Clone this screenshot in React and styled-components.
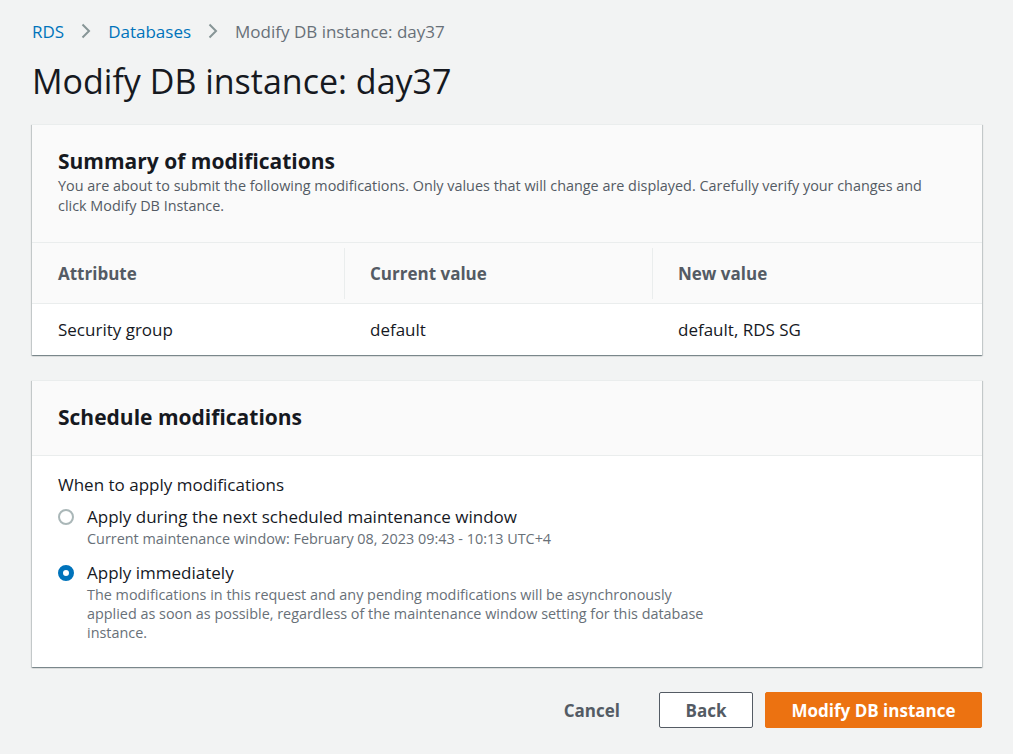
import styled, { createGlobalStyle } from "styled-components";

const GlobalStyle = createGlobalStyle`
  html, body {
    margin: 0;
    padding: 0;
    background: #f2f3f3;
    font-family: "Open Sans", "Noto Sans", sans-serif;
    color: #16191f;
  }
`;

const Chevron = () => (
  <svg width="12" height="18" viewBox="0 0 12 18">
    <path d="M2.5 2.5l6.5 6.5-6.5 6.5" fill="none" stroke="#879596" strokeWidth="2" />
  </svg>
);

const rows = [{ attr: "Security group", current: "default", next: "default, RDS SG" }];

export default function App() {
  return (
    <Page>
      <GlobalStyle />
      <Crumbs>
        <CrumbLink>RDS</CrumbLink>
        <Chevron />
        <CrumbLink>Databases</CrumbLink>
        <Chevron />
        <CrumbCurrent>Modify DB instance: day37</CrumbCurrent>
      </Crumbs>
      <Title>Modify DB instance: day37</Title>

      <Card>
        <CardHeader>
          <CardTitle>Summary of modifications</CardTitle>
          <CardDesc>
            You are about to submit the following modifications. Only values that will change are displayed.
            Carefully verify your changes and click Modify DB Instance.
          </CardDesc>
        </CardHeader>
        <Table>
          <HeadRow>
            <HeadCell>Attribute</HeadCell>
            <HeadCell divider>Current value</HeadCell>
            <HeadCell divider>New value</HeadCell>
          </HeadRow>
          {rows.map((r) => (
            <BodyRow key={r.attr}>
              <BodyCell>{r.attr}</BodyCell>
              <BodyCell>{r.current}</BodyCell>
              <BodyCell>{r.next}</BodyCell>
            </BodyRow>
          ))}
        </Table>
      </Card>

      <Card>
        <CardHeader>
          <CardTitle>Schedule modifications</CardTitle>
        </CardHeader>
        <CardBody>
          <FieldLabel>When to apply modifications</FieldLabel>
          <Option>
            <Radio />
            <OptionText>
              <OptionLabel>Apply during the next scheduled maintenance window</OptionLabel>
              <OptionDesc>Current maintenance window: February 08, 2023 09:43 - 10:13 UTC+4</OptionDesc>
            </OptionText>
          </Option>
          <Option>
            <Radio checked />
            <OptionText>
              <OptionLabel>Apply immediately</OptionLabel>
              <OptionDesc>
                The modifications in this request and any pending modifications will be asynchronously applied as
                soon as possible, regardless of the maintenance window setting for this database instance.
              </OptionDesc>
            </OptionText>
          </Option>
        </CardBody>
      </Card>

      <Actions>
        <LinkButton>Cancel</LinkButton>
        <NormalButton>Back</NormalButton>
        <PrimaryButton>Modify DB instance</PrimaryButton>
      </Actions>
    </Page>
  );
}

const Page = styled.div`
  padding: 18px 31px 26px 32px;
`;

const Crumbs = styled.div`
  display: flex;
  align-items: center;
  gap: 16px;
  font-size: 17px;
  height: 26px;
`;

const CrumbLink = styled.span`
  color: #0073bb;
`;

const CrumbCurrent = styled.span`
  color: #687078;
`;

const Title = styled.h1`
  margin: 16px 0 22px;
  font-size: 34px;
  font-weight: 400;
  line-height: 42px;
  color: #16191f;
`;

const Card = styled.div`
  background: #fff;
  box-shadow: 0 1px 1px 0 rgba(0, 28, 36, 0.3), 1px 1px 1px 0 rgba(0, 28, 36, 0.15),
    -1px 1px 1px 0 rgba(0, 28, 36, 0.15);
  border-top: 1px solid #eaeded;
  margin-bottom: 25px;
`;

const CardHeader = styled.div`
  background: #fafafa;
  border-bottom: 1px solid #eaeded;
  padding: 21px 26px 23px;
`;

const CardTitle = styled.h2`
  margin: 0;
  font-size: 21px;
  font-weight: 700;
  line-height: 30px;
  color: #16191f;
`;

const CardDesc = styled.p`
  margin: 0;
  padding-bottom: 3px;
  max-width: 884px;
  font-size: 14.4px;
  line-height: 20px;
  color: #545b64;
`;

const Table = styled.div`
  display: flex;
  flex-direction: column;
`;

const HeadRow = styled.div`
  display: grid;
  grid-template-columns: 312px 308px 1fr;
  height: 60px;
  align-items: center;
  background: #fafafa;
  border-bottom: 1px solid #eaeded;
`;

const HeadCell = styled.div`
  position: relative;
  padding-left: 26px;
  font-size: 17px;
  font-weight: 700;
  color: #545b64;
  ${(p) =>
    p.divider &&
    `
    &::before {
      content: "";
      position: absolute;
      left: 0;
      top: -14px;
      bottom: -14px;
      border-left: 1px solid #eaeded;
    }
  `}
`;

const BodyRow = styled.div`
  display: grid;
  grid-template-columns: 312px 308px 1fr;
  height: 51px;
  align-items: center;
`;

const BodyCell = styled.div`
  padding-left: 26px;
  font-size: 17px;
  color: #16191f;
`;

const CardBody = styled.div`
  padding: 17px 26px 25px;
`;

const FieldLabel = styled.div`
  font-size: 17px;
  line-height: 24px;
  margin-bottom: 8px;
`;

const Option = styled.div`
  display: flex;
  gap: 13px;
  margin-bottom: 13px;
  &:last-child {
    margin-bottom: 0;
  }
`;

const Radio = styled.span`
  flex: none;
  width: 16px;
  height: 16px;
  margin-top: 4px;
  border-radius: 50%;
  box-sizing: border-box;
  border: ${(p) => (p.checked ? "5px solid #0073bb" : "2px solid #aab7b8")};
  background: #fff;
`;

const OptionText = styled.div`
  display: flex;
  flex-direction: column;
  max-width: 630px;
`;

const OptionLabel = styled.div`
  font-size: 17px;
  line-height: 24px;
`;

const OptionDesc = styled.div`
  font-size: 14.4px;
  line-height: 19px;
  color: #687078;
`;

const Actions = styled.div`
  display: flex;
  justify-content: flex-end;
  align-items: center;
  gap: 12px;
`;

const BaseButton = styled.button`
  font-family: inherit;
  font-size: 17px;
  font-weight: 700;
  height: 36px;
  border-radius: 2px;
  cursor: pointer;
`;

const LinkButton = styled(BaseButton)`
  background: none;
  border: none;
  color: #545b64;
  padding: 0 20px;
  margin-right: 7px;
`;

const NormalButton = styled(BaseButton)`
  width: 94px;
  background: #fff;
  border: 1px solid #545b64;
  color: #545b64;
`;

const PrimaryButton = styled(BaseButton)`
  width: 217px;
  background: #ec7211;
  border: 1px solid #ec7211;
  color: #fff;
`;
